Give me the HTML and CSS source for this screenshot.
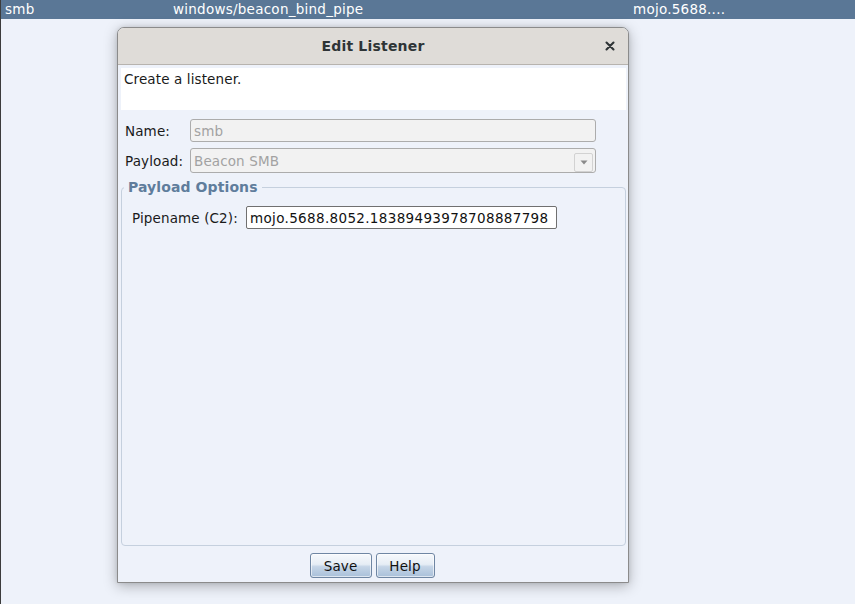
FILE: index.html
```html
<!DOCTYPE html>
<html>
<head>
<meta charset="utf-8">
<link rel="stylesheet" href="styles.css">
</head>
<body>
<div class="page">
  <div class="table-row">
    <span class="cell c1">smb</span>
    <span class="cell c2">windows/beacon_bind_pipe</span>
    <span class="cell c3">mojo.5688....</span>
  </div>

  <div class="dialog">
    <div class="titlebar">
      <span class="title">Edit Listener</span>
      <span class="close">
        <svg width="10" height="10" viewBox="0 0 10 10"><path d="M1.5 1.5 L8.5 8.5 M8.5 1.5 L1.5 8.5" stroke="#2e3436" stroke-width="2.1" stroke-linecap="round"/></svg>
      </span>
    </div>
    <div class="dbody">
      <div class="desc">Create a listener.</div>
      <div class="form-row name-row">
        <span class="label">Name:</span>
        <div class="field disabled">smb</div>
      </div>
      <div class="form-row payload-row">
        <span class="label">Payload:</span>
        <div class="field combo disabled">
          <span>Beacon SMB</span>
          <span class="arrow"><svg width="8" height="5" viewBox="0 0 8 5"><path d="M0.5 0.5 L7.5 0.5 L4 4.5 Z" fill="#8a8a8a"/></svg></span>
        </div>
      </div>
      <div class="group">
        <span class="legend">Payload Options</span>
        <div class="pipe-row">
          <span class="plabel">Pipename (C2):</span>
          <div class="field input">mojo.5688.8052.18389493978708887798</div>
        </div>
      </div>
      <div class="buttons">
        <button class="btn save">Save</button>
        <button class="btn help">Help</button>
      </div>
    </div>
  </div>
</div>
</body>
</html>
```

FILE: styles.css
```css
* { box-sizing: border-box; }
html, body { margin: 0; padding: 0; }
body {
  width: 855px;
  height: 604px;
  overflow: hidden;
  background: #eef2fa;
  font-family: "DejaVu Sans", sans-serif;
  font-size: 13.5px;
  letter-spacing: 0.12px;
  color: #1a1a1a;
}
.page {
  position: relative;
  width: 855px;
  height: 604px;
  border-left: 1px solid #3c3c3c;
}
.table-row {
  display: grid;
  grid-template-columns: 168px 460px 1fr;
  height: 19px;
  line-height: 18px;
  padding-left: 4px;
  background: #5a7796;
  color: #ffffff;
  letter-spacing: 0.25px;
}
.cell { white-space: nowrap; }

.dialog {
  position: absolute;
  left: 116px;
  top: 27px;
  width: 512px;
  height: 556px;
  border: 1px solid #8b8b8b;
  border-radius: 7px 7px 0 0;
  background: #eef2fa;
  box-shadow: 0 3px 14px rgba(0, 0, 0, 0.28), 0 0 4px rgba(0,0,0,0.1);
  display: flex;
  flex-direction: column;
}
.titlebar {
  height: 37px;
  flex: none;
  background: #dfdcd8;
  border-bottom: 1px solid #b7b3ae;
  border-radius: 6px 6px 0 0;
  display: flex;
  align-items: center;
  justify-content: center;
  position: relative;
}
.title {
  font-weight: bold;
  font-size: 14px;
  letter-spacing: 0.2px;
  color: #2e3436;
}
.close {
  position: absolute;
  right: 13px;
  top: 13px;
  width: 10px;
  height: 10px;
  display: flex;
}
.dbody {
  flex: 1;
  display: flex;
  flex-direction: column;
}
.desc {
  margin: 3px 2px 0 3px;
  height: 42px;
  background: #ffffff;
  padding: 3px 3px;
  line-height: 17px;
}
.form-row {
  display: flex;
  align-items: center;
  padding-left: 7px;
  padding-right: 32px;
}
.name-row { margin-top: 9px; height: 23px; }
.payload-row { margin-top: 6px; height: 25px; }
.label { width: 65px; flex: none; }
.field {
  flex: 1;
  height: 100%;
  border-radius: 3px;
  display: flex;
  align-items: center;
  padding-left: 3px;
}
.disabled {
  background: #f2f2f2;
  border: 1px solid #acacac;
  color: #a2a2a2;
}
.combo {
  justify-content: space-between;
  padding-right: 2px;
}
.arrow {
  width: 19px;
  height: 19px;
  margin-top: 3px;
  border: 1px solid #d2d2d2;
  border-radius: 2px;
  display: flex;
  align-items: center;
  justify-content: center;
  background: #f2f2f2;
}
.group {
  position: relative;
  margin: 14px 2px 0 3px;
  height: 359px;
  border: 1px solid #c5d0de;
  border-radius: 4px;
  padding: 18px 0 0 10px;
}
.legend {
  position: absolute;
  left: 2px;
  top: -10px;
  padding: 0 4px;
  background: #eef2fa;
  font-weight: bold;
  font-size: 14px;
  line-height: 18px;
  letter-spacing: 0.1px;
  color: #5f7d9c;
}
.pipe-row {
  display: flex;
  align-items: center;
  height: 23px;
}
.plabel { width: 114px; flex: none; }
.input {
  flex: none;
  width: 311px;
  background: #ffffff;
  border: 1px solid #707070;
  border-radius: 2px;
  color: #111;
  letter-spacing: 0.34px;
}
.buttons {
  margin-top: 7px;
  display: flex;
  justify-content: center;
  gap: 4px;
  padding-right: 2px;
}
.btn {
  height: 25px;
  font-family: "DejaVu Sans", sans-serif;
  font-size: 13.5px;
  letter-spacing: 0.12px;
  color: #111;
  border: 1px solid #6f86a3;
  border-radius: 3px;
  background: linear-gradient(to bottom, #f7f9fc 0%, #e6edf5 45%, #c5d5e7 55%, #a9c0d9 100%);
  padding: 0;
  box-shadow: inset 0 0 0 1px rgba(255,255,255,0.6);
}
.save { width: 62px; }
.help { width: 59px; }
```
